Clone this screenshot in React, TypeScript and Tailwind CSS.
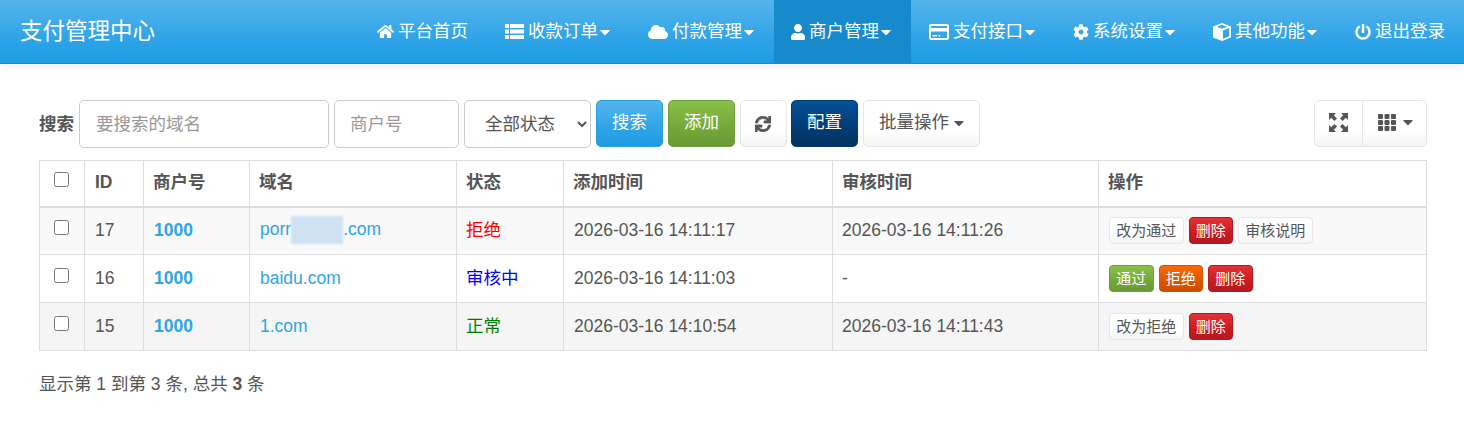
import type { ReactNode } from 'react'
import { FaCaretDown, FaCloud, FaCog, FaHome, FaPowerOff, FaSync, FaUser } from 'react-icons/fa'

const font = 'font-["Liberation_Sans","Noto_Sans_CJK_SC",sans-serif]'

function ListIcon() {
  return (
    <svg viewBox="0 0 19 15" className="h-[15px] w-[19px] fill-white">
      <path d="M0 0h4v4H0zM5 0h14v4H5zM0 5.500h4v4H0zM5 5.500h14v4H5zM0 11h4v4H0zM5 11h14v4H5z" />
    </svg>
  )
}

function CardIcon() {
  return (
    <svg viewBox="0 0 20 16" className="h-[16px] w-[20px] fill-white">
      <path d="M2 0h16a2 2 0 0 1 2 2v12a2 2 0 0 1-2 2H2a2 2 0 0 1-2-2V2a2 2 0 0 1 2-2zm0 2v2h16V2zm0 5.500V14h16V7.500zM3.500 11H8v1.500H3.500zM9.500 11H11v1.500H9.500z" fillRule="evenodd" />
    </svg>
  )
}

function CubeIcon() {
  return (
    <svg viewBox="0 0 18 18" className="h-[18px] w-[18px] fill-white">
      <path d="M9 0l9 3.500v11L9 18l-9-3.500v-11zM3.800 3.700L9 5.700l5.200-2L9 1.700zM10 7.400v8.300l6.200-2.500V5z" fillRule="evenodd" />
    </svg>
  )
}

function GridIcon() {
  return (
    <svg viewBox="0 0 18 17" className="h-[17px] w-[18px] fill-[#555]">
      <rect x="0" y="0" width="5" height="5" rx="1" />
      <rect x="6.500" y="0" width="5" height="5" rx="1" />
      <rect x="13" y="0" width="5" height="5" rx="1" />
      <rect x="0" y="6" width="5" height="5" rx="1" />
      <rect x="6.500" y="6" width="5" height="5" rx="1" />
      <rect x="13" y="6" width="5" height="5" rx="1" />
      <rect x="0" y="12" width="5" height="5" rx="1" />
      <rect x="6.500" y="12" width="5" height="5" rx="1" />
      <rect x="13" y="12" width="5" height="5" rx="1" />
    </svg>
  )
}

function FullscreenIcon() {
  return (
    <svg viewBox="0 0 19 19" className="h-[19px] w-[19px] fill-[#555]">
      <path d="M0 0h7L4.800 2.200 8 5.400 5.400 8 2.200 4.800 0 7z" />
      <path d="M19 0v7l-2.200-2.200L13.600 8 11 5.400l3.200-3.200L12 0z" />
      <path d="M0 19v-7l2.200 2.200L5.400 11 8 13.600l-3.200 3.200L7 19z" />
      <path d="M19 19h-7l2.200-2.200L11 13.600 13.600 11l3.200 3.200L19 12z" />
    </svg>
  )
}

function Caret({ className = '' }: { className?: string }) {
  return <FaCaretDown className={`h-[16px] w-[16px] ${className}`} />
}

const navItems = [
  { label: '平台首页', icon: <FaHome className="h-[17px] w-[17px]" />, caret: false, cls: 'pl-[18px] pr-[19px]' },
  { label: '收款订单', icon: <ListIcon />, caret: true, cls: 'px-[18px]' },
  { label: '付款管理', icon: <FaCloud className="h-[20px] w-[20px]" />, caret: true, cls: 'px-[18px]' },
  { label: '商户管理', icon: <FaUser className="h-[16px] w-[14px]" />, caret: true, cls: 'pl-[17px] pr-[18px] bg-[#178acc]' },
  { label: '支付接口', icon: <CardIcon />, caret: true, cls: 'px-[18px]' },
  { label: '系统设置', icon: <FaCog className="h-[16px] w-[16px]" />, caret: true, cls: 'px-[18px]' },
  { label: '其他功能', icon: <CubeIcon />, caret: true, cls: 'px-[18px]' },
  { label: '退出登录', icon: <FaPowerOff className="h-[16px] w-[16px]" />, caret: false, cls: 'px-[18px]' },
]

const btnColors = {
  default: 'border-[#e6e6e6] bg-gradient-to-b from-white via-white via-60% to-[#f5f5f5] text-[#555]',
  primary: 'border-[#2a9de0] bg-gradient-to-b from-[#54b4eb] via-[#2fa4e7] via-60% to-[#1d9ce5] text-white',
  success: 'border-[#6f9f3a] bg-gradient-to-b from-[#88c149] via-[#73a839] via-60% to-[#699934] text-white',
  info: 'border-[#033c73] bg-gradient-to-b from-[#04519b] via-[#033c73] via-60% to-[#02325f] text-white',
  warning: 'border-[#d65300] bg-gradient-to-b from-[#ff6707] via-[#dd5600] via-60% to-[#c94e00] text-white',
  danger: 'border-[#b5191f] bg-gradient-to-b from-[#e72f36] via-[#c71c22] via-60% to-[#b5191f] text-white',
}

type Color = keyof typeof btnColors

function Btn({ color = 'default', className = '', children }: { color?: Color; className?: string; children: ReactNode }) {
  return (
    <button className={`flex h-[47px] items-center justify-center rounded-[5px] border text-[17.5px] ${btnColors[color]} ${className}`}>
      {children}
    </button>
  )
}

function SmallBtn({ color = 'default', children }: { color?: Color; children: ReactNode }) {
  return <button className={`h-[27px] rounded-[4px] border px-[6.25px] text-[15px] leading-[24px] ${btnColors[color]}`}>{children}</button>
}

const rows = [
  {
    id: 17,
    domain: (
      <>
        porr
        <span className="inline-block h-[28px] w-[52px] bg-[#cfe2f3] align-middle blur-[1px]" />
        .com
      </>
    ),
    status: '拒绝',
    statusClass: 'text-[#ff0000]',
    added: '2026-03-16 14:11:17',
    reviewed: '2026-03-16 14:11:26',
    bg: 'bg-[#f9f9f9]',
    pad: 'pb-[2px]',
    actions: [
      ['改为通过', 'default'],
      ['删除', 'danger'],
      ['审核说明', 'default'],
    ],
  },
  {
    id: 16,
    domain: 'baidu.com',
    status: '审核中',
    statusClass: 'text-[#0000ff]',
    added: '2026-03-16 14:11:03',
    reviewed: '-',
    bg: 'bg-white',
    pad: 'pb-0',
    actions: [
      ['通过', 'success'],
      ['拒绝', 'warning'],
      ['删除', 'danger'],
    ],
  },
  {
    id: 15,
    domain: '1.com',
    status: '正常',
    statusClass: 'text-[#008000]',
    added: '2026-03-16 14:10:54',
    reviewed: '2026-03-16 14:11:43',
    bg: 'bg-[#f5f5f5]',
    pad: 'pb-0',
    actions: [
      ['改为拒绝', 'default'],
      ['删除', 'danger'],
    ],
  },
]

const headers = ['商户号', '域名', '状态', '添加时间', '审核时间', '操作']

export default function App() {
  return (
    <div className={`h-[421px] overflow-hidden bg-white text-[17.5px] text-[#555] ${font}`}>
      <nav className="flex h-[64px] items-stretch justify-between border-b border-[#178acc] bg-gradient-to-b from-[#54b4eb] via-[#2fa4e7] via-60% to-[#1d9ce5] text-white shadow-[0_1px_10px_rgba(0,0,0,0.1)]">
        <a className="flex items-center pl-[20px] text-[22.5px]">支付管理中心</a>
        <ul className="flex items-stretch pr-[1px]">
          {navItems.map((item) => (
            <li key={item.label} className={`flex items-center gap-[4px] ${item.cls}`}>
              {item.icon}
              <span>{item.label}</span>
              {item.caret && <Caret className="-mr-[1px] -ml-[5px]" />}
            </li>
          ))}
        </ul>
      </nav>

      <main className="pl-[39px] pr-[37px] pt-[36px]">
        <div className="flex items-start justify-between">
          <div className="flex items-start gap-[5px]">
            <label className="flex h-[48px] items-center font-bold">搜索</label>
            <input
              placeholder="要搜索的域名"
              className="h-[48px] w-[250px] rounded-[5px] border border-[#ccc] pl-[16px] pr-[15px] placeholder:text-[#999]"
            />
            <input
              placeholder="商户号"
              className="h-[48px] w-[125px] rounded-[5px] border border-[#ccc] px-[15px] placeholder:text-[#999]"
            />
            <select className="h-[48px] w-[127px] rounded-[5px] border border-[#ccc] bg-white pl-[16px] text-[#555]">
              <option>全部状态</option>
            </select>
            <Btn color="primary" className="w-[67px] pb-[2px]">搜索</Btn>
            <Btn color="success" className="w-[67px] pb-[2px]">添加</Btn>
            <Btn className="w-[47px] pr-[1px]">
              <FaSync className="h-[16px] w-[16px] stroke-[24px]" />
            </Btn>
            <Btn color="info" className="-ml-[1px] w-[67px] pb-[2px]">配置</Btn>
            <Btn className="w-[117px] gap-[2px] pb-[2px] pl-[3px]">
              批量操作
              <Caret />
            </Btn>
          </div>
          <div className="flex">
            <Btn className="w-[49px] rounded-r-none pb-[3px]">
              <FullscreenIcon />
            </Btn>
            <Btn className="-ml-[1px] w-[65px] gap-[4px] rounded-l-none pb-[3px] pl-[4px]">
              <GridIcon />
              <Caret />
            </Btn>
          </div>
        </div>

        <table className="mt-[12px] w-[1388px] table-fixed border-collapse border border-[#ddd]">
          <colgroup>
            <col className="w-[45px]" />
            <col className="w-[59px]" />
            <col className="w-[106px]" />
            <col className="w-[207px]" />
            <col className="w-[107px]" />
            <col className="w-[269px]" />
            <col className="w-[266px]" />
            <col />
          </colgroup>
          <thead>
            <tr className="h-[46px]">
              <th className="border border-b-2 border-[#ddd] text-center">
                <input type="checkbox" className="mr-[2px] mb-[9px] h-[15px] w-[15px] align-middle" />
              </th>
              <th className="border border-b-2 border-[#ddd] pb-[2px] pl-[10px] text-left font-bold">ID</th>
              {headers.map((h) => (
                <th key={h} className="border border-b-2 border-[#ddd] pb-[2px] pl-[9px] pr-[10px] text-left font-bold">
                  {h}
                </th>
              ))}
            </tr>
          </thead>
          <tbody>
            {rows.map((row) => (
              <tr key={row.id} className={`h-[48px] ${row.bg}`}>
                <td className="border border-[#ddd] text-center">
                  <input type="checkbox" className="mr-[2px] mb-[9px] h-[15px] w-[15px] align-middle" />
                </td>
                <td className={`border border-[#ddd] px-[10px] ${row.pad}`}>{row.id}</td>
                <td className={`border border-[#ddd] px-[10px] font-bold text-[#2fa4e7] ${row.pad}`}>1000</td>
                <td className={`border border-[#ddd] px-[10px] text-[#2fa4e7] ${row.pad}`}>{row.domain}</td>
                <td className={`border border-[#ddd] pl-[9px] pr-[10px] ${row.pad} ${row.statusClass}`}>{row.status}</td>
                <td className={`border border-[#ddd] px-[10px] ${row.pad}`}>{row.added}</td>
                <td className={`border border-[#ddd] pl-[9px] pr-[10px] ${row.pad}`}>{row.reviewed}</td>
                <td className="border border-[#ddd] px-[10px]">
                  <div className="flex gap-[5px]">
                    {row.actions.map(([label, color]) => (
                      <SmallBtn key={label} color={color as Color}>
                        {label}
                      </SmallBtn>
                    ))}
                  </div>
                </td>
              </tr>
            ))}
          </tbody>
        </table>

        <p className="mt-[20px]">
          显示第 1 到第 3 条, 总共 <b>3</b> 条
        </p>
      </main>
    </div>
  )
}
